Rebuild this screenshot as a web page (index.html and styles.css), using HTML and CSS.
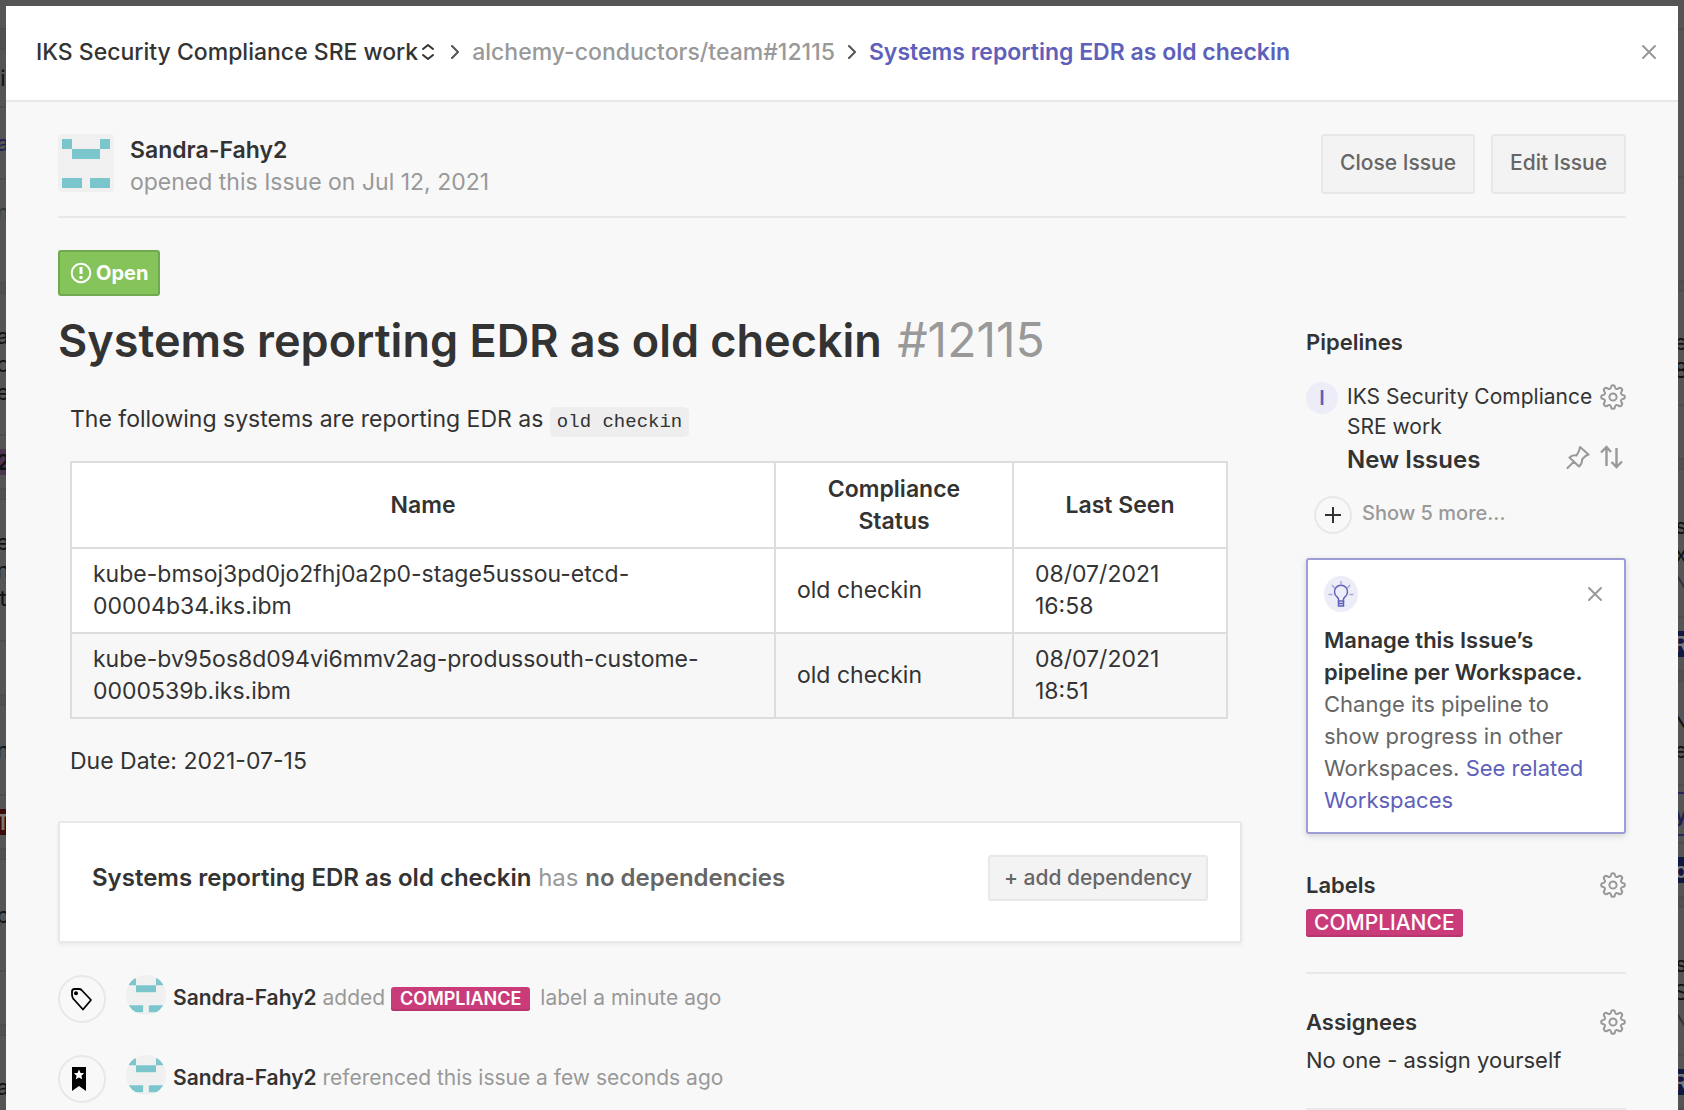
FILE: index.html
```html
<!DOCTYPE html>
<html lang="en">
<head>
<meta charset="utf-8">
<meta name="viewport" content="width=device-width, initial-scale=1">
<title>Systems reporting EDR as old checkin #12115</title>
<link rel="stylesheet" href="styles.css">
</head>
<body>
<svg class="sprite" aria-hidden="true">
  <symbol id="gear" viewBox="0 0 26 26"><g fill="none" stroke="currentColor" stroke-width="2" stroke-linejoin="round"><circle cx="13" cy="13" r="3.6"/><path d="M11 3.200C11.300 0.500 14.700 0.500 15 3.200C15.300 5.200 17 5.500 18.500 4.400C20.600 2.700 23.300 5.400 21.600 7.500C20.500 9 20.800 10.700 22.800 11C25.500 11.300 25.500 14.700 22.800 15C20.800 15.300 20.500 17 21.600 18.500C23.300 20.600 20.600 23.300 18.500 21.600C17 20.500 15.300 20.800 15 22.800C14.700 25.500 11.300 25.500 11 22.800C10.700 20.800 9 20.500 7.500 21.600C5.400 23.300 2.700 20.600 4.400 18.500C5.500 17 5.200 15.300 3.200 15C0.500 14.700 0.500 11.300 3.200 11C5.200 10.700 5.500 9 4.400 7.500C2.700 5.400 5.400 2.700 7.500 4.400C9 5.500 10.700 5.200 11 3.200Z"/></g></symbol>
  <symbol id="cross" viewBox="0 0 16 16"><path d="M2 2l12 12M14 2L2 14" fill="none" stroke="currentColor" stroke-width="2" stroke-linecap="round"/></symbol>
  <symbol id="chevron" viewBox="0 0 10 14"><path d="M2 1l6 6-6 6" fill="none" stroke="currentColor" stroke-width="2" stroke-linecap="round" stroke-linejoin="round"/></symbol>
  <symbol id="identicon" viewBox="0 0 56 58" preserveAspectRatio="none"><rect width="56" height="58" fill="#f0f0f0"/><path fill="#7bc6cd" d="M4 5h10v10h28V5h10v10H42v10H14V15H4zM4 44h20v10H4zM32 44h20v10H32z"/></symbol>
</svg>
<div class="app">
  <div class="board board-left" aria-hidden="true">
    <div class="slot h30"></div><div class="gap h18"></div>
    <div class="slot h58">i</div><div class="slot h72 blue">a</div><div class="slot h104 pale start">n</div><div class="gap h10"></div>
    <div class="slot h142"><span>a</span><span>o</span><span>e</span></div><div class="slot h54"><b class="tag purple">2</b></div><div class="gap h10"></div>
    <div class="slot h142"><span>e</span><span>n</span><span>t</span></div><div class="slot h54"></div><div class="gap h10"></div>
    <div class="slot h90">n</div><div class="slot h54"><b class="tag red">T</b></div><div class="gap h10"></div>
    <div class="slot h112">p</div><div class="slot h54"></div><div class="gap h10"></div>
    <div class="slot h104">a</div>
  </div>
  <main class="modal" role="dialog" aria-labelledby="issue-title">
    <header class="topbar">
      <nav class="crumbs" aria-label="Breadcrumb">
        <button type="button" class="workspace">IKS Security Compliance SRE work
          <svg width="12" height="18" viewBox="0 0 12 18" aria-hidden="true"><path d="M1 6l5-4 5 4M1 12l5 4 5-4" fill="none" stroke="currentColor" stroke-width="2" stroke-linecap="round" stroke-linejoin="round"/></svg>
        </button>
        <svg class="sep sep-wide" width="10" height="14" aria-hidden="true"><use href="#chevron"/></svg>
        <a href="#repo" class="repo">alchemy-conductors/team#12115</a>
        <svg class="sep" width="10" height="14" aria-hidden="true"><use href="#chevron"/></svg>
        <a href="#issue" class="current">Systems reporting EDR as old checkin</a>
      </nav>
      <button type="button" class="icon-button" aria-label="Close"><svg width="16" height="16"><use href="#cross"/></svg></button>
    </header>

    <div class="content">
      <section class="author">
        <svg class="avatar" width="56" height="58" role="img" aria-label="Sandra-Fahy2"><use href="#identicon"/></svg>
        <div class="author-text">
          <strong>Sandra-Fahy2</strong>
          <span class="muted">opened this Issue on Jul 12, 2021</span>
        </div>
        <button type="button" class="button large">Close Issue</button>
        <button type="button" class="button large">Edit Issue</button>
      </section>

      <div class="columns">
        <div class="primary">
          <span class="state">
            <svg width="22" height="22" viewBox="0 0 22 22" aria-hidden="true"><circle cx="11" cy="11" r="9.300" fill="none" stroke="#fff" stroke-width="2"/><path d="M11 5v7M11 14v3" stroke="#fff" stroke-width="3"/></svg>Open
          </span>
          <h1 id="issue-title">Systems reporting EDR as old checkin <span>#12115</span></h1>

          <article class="description">
            <p>The following systems are reporting EDR as <code>old checkin</code></p>
            <table>
              <colgroup><col><col class="col-status"><col class="col-seen"></colgroup>
              <thead><tr><th scope="col">Name</th><th scope="col">Compliance Status</th><th scope="col">Last Seen</th></tr></thead>
              <tbody>
                <tr><td>kube-bmsoj3pd0jo2fhj0a2p0-stage5ussou-etcd-00004b34.iks.ibm</td><td>old checkin</td><td>08/07/2021 16:58</td></tr>
                <tr><td>kube-bv95os8d094vi6mmv2ag-produssouth-custome-0000539b.iks.ibm</td><td>old checkin</td><td>08/07/2021 18:51</td></tr>
              </tbody>
            </table>
            <p>Due Date: 2021-07-15</p>
          </article>

          <section class="dependencies">
            <p><strong>Systems reporting EDR as old checkin</strong> has <b>no dependencies</b></p>
            <button type="button" class="button">+ add dependency</button>
          </section>

          <ul class="activity">
            <li>
              <span class="event"><svg width="22" height="24" viewBox="0 0 22 24" aria-hidden="true"><path d="M1 7.500V4.500Q1 2 3.500 2H8Q9.500 2 10.500 3L20 13L12 22.500L2.500 12Q1 10.500 1 7.500Z" fill="none" stroke="#000" stroke-width="1.800" stroke-linejoin="round"/><circle cx="5" cy="6.200" r="2"/></svg></span>
              <svg class="face" width="40" height="40" aria-hidden="true"><use href="#identicon"/></svg>
              <p><strong>Sandra-Fahy2</strong> added <span class="label small">COMPLIANCE</span> label a minute ago</p>
            </li>
            <li>
              <span class="event"><svg width="22" height="24" viewBox="0 0 22 24" aria-hidden="true"><path d="M1 0h14v24l-7-5-7 5z"/><path fill="#fff" d="M8 2.500l1.500 3.400 3.700.4-2.800 2.400.8 3.600L8 10.400l-3.200 1.900.8-3.600-2.800-2.400 3.700-.4z"/></svg></span>
              <svg class="face" width="40" height="40" aria-hidden="true"><use href="#identicon"/></svg>
              <p><strong>Sandra-Fahy2</strong> referenced this issue a few seconds ago</p>
            </li>
          </ul>
        </div>

        <aside class="sidebar">
          <section class="pipelines">
            <h2>Pipelines</h2>
            <div class="pipeline">
              <span class="initial">I</span>
              <span class="pipeline-name">IKS Security Compliance SRE work</span>
              <button type="button" class="icon-button" aria-label="Pipeline settings"><svg width="26" height="26"><use href="#gear"/></svg></button>
            </div>
            <div class="stage">
              <strong>New Issues</strong>
              <button type="button" class="icon-button" aria-label="Pin"><svg width="24" height="24" viewBox="0 0 24 24"><path d="M14 2L22.500 9.500L19.500 11L16 14.500Q16.500 18.500 13 21.500L3.500 12.500Q6.500 9.500 10.500 10.500L13 6ZM8 16.500L1.500 23" fill="none" stroke="currentColor" stroke-width="2" stroke-linecap="round" stroke-linejoin="round"/></svg></button>
              <button type="button" class="icon-button" aria-label="Move"><svg width="24" height="24" viewBox="0 0 24 24"><path d="M6.500 21V2M1 7.500L6.500 2L11 7M16.500 3v19M11.500 17l5 5 5.500-5.500" fill="none" stroke="currentColor" stroke-width="2.400"/></svg></button>
            </div>
            <button type="button" class="show-more"><span class="plus"><svg width="18" height="18" viewBox="0 0 18 18" aria-hidden="true"><path d="M9 1v16M1 9h16" stroke="#333" stroke-width="2"/></svg></span>Show 5 more...</button>
          </section>

          <section class="tip">
            <div class="tip-head">
              <svg width="34" height="36" viewBox="0 0 34 36" aria-hidden="true"><ellipse cx="17" cy="18" rx="17" ry="18" fill="#ecedf6"/><g fill="none" stroke="#5e60ba" stroke-width="1.500"><path d="M14.500 25V23Q14.500 22 13 20.800A6.500 6.500 0 1 1 21 20.800Q19.500 22 19.500 23V25Z"/><path d="M14.500 25v5h5v-5M14.500 27.500h5"/></g><path d="M17 5v4M8 9l2.500 3M26 9l-2.500 3M4.500 18.500h4M25.500 18.500h4" stroke="#a6a7dd" stroke-width="1.500"/></svg>
              <button type="button" class="icon-button" aria-label="Dismiss"><svg width="16" height="16"><use href="#cross"/></svg></button>
            </div>
            <p><strong>Manage this Issue’s pipeline per Workspace.</strong> Change its pipeline to show progress in other Workspaces. <a href="#related">See related Workspaces</a></p>
          </section>

          <section class="group">
            <div class="group-head"><h2>Labels</h2><button type="button" class="icon-button" aria-label="Edit labels"><svg width="26" height="26"><use href="#gear"/></svg></button></div>
            <span class="label">COMPLIANCE</span>
          </section>
          <section class="group assignees">
            <div class="group-head"><h2>Assignees</h2><button type="button" class="icon-button" aria-label="Edit assignees"><svg width="26" height="26"><use href="#gear"/></svg></button></div>
            <p>No one - assign yourself</p>
          </section>
        </aside>
      </div>
    </div>
  </main>
  <div class="board board-right" aria-hidden="true">
    <div class="slot h30"></div><div class="slot h148"></div><div class="slot h104"></div><div class="gap h10"></div>
    <div class="slot h114 end"><span>e</span><span>8</span></div><div class="slot h54"></div><div class="gap h10"></div>
    <div class="slot h148 end"><span>s</span><span>x</span><span class="pale">N</span></div><div class="slot h54"><b class="tag navy">R</b></div><div class="gap h10"></div>
    <div class="slot h104 end"><span>N</span><span>e</span></div><div class="slot h58"><b class="outline">y</b></div><div class="slot h54"><b class="tag navy">o</b></div><div class="gap h10"></div>
    <div class="slot h148 end"><span>s</span><span>S</span><span class="pale">N</span></div><div class="slot h54"><b class="tag navy">R</b></div>
  </div>
</div>
</body>
</html>
```

FILE: styles.css
```css
*, *::before, *::after { box-sizing: border-box; }

body {
  margin: 0;
  font: 22px/32px Inter, "Liberation Sans", sans-serif;
  color: #333;
  background: #555;
}

p, h1, h2, ul { margin: 0; padding: 0; }
strong, b { font-weight: 600; }
svg { display: block; flex: none; }
a { color: #5e60ba; text-decoration: none; }
button { font: inherit; color: inherit; cursor: pointer; }
.sprite { position: absolute; width: 0; height: 0; }
.muted { color: #999; }

.app {
  display: grid;
  grid-template-columns: 6px minmax(0, 1fr) 6px;
  height: 100vh;
  overflow: hidden;
}

/* Dimmed board behind the dialog */
.board { overflow: hidden; color: #111; line-height: 28px; }
.slot {
  display: flex;
  flex-direction: column;
  align-items: center;
  justify-content: center;
  border-bottom: 2px solid #4d4d4d;
}
.slot.start { justify-content: flex-start; padding-top: 18px; }
.slot.end { justify-content: flex-end; padding-bottom: 20px; }
.gap { background: #505050; border-bottom: 2px solid #4d4d4d; }
.pale { color: #333; }
.blue { color: #1f2050; }
.tag { width: 24px; text-align: center; color: #777; line-height: 26px; }
.purple { background: #4d3450; color: #111; }
.red { background: #3d0a0a; }
.navy { background: #101842; }
.outline { width: 24px; border: 2px solid #24265a; color: #1f2050; line-height: 40px; text-align: center; }
.h10 { height: 10px; }
.h18 { height: 20px; }
.h30 { height: 30px; }
.h54 { height: 54px; }
.h58 { height: 58px; }
.h72 { height: 72px; }
.h90 { height: 90px; }
.h104 { height: 104px; }
.h112 { height: 112px; }
.h114 { height: 114px; }
.h142 { height: 142px; }
.h148 { height: 148px; }

.modal { margin-top: 6px; background: #f8f8f8; }

.topbar {
  display: flex;
  align-items: center;
  justify-content: space-between;
  min-height: 96px;
  padding: 0 21px 2px 30px;
  background: #fff;
  border-bottom: 2px solid #e8e8e8;
}
.crumbs { display: flex; align-items: center; font-size: 23px; font-weight: 500; }
.workspace {
  display: flex;
  align-items: center;
  gap: 4px;
  padding: 0;
  border: 0;
  background: none;
  font-weight: 500;
}
.sep { margin: 0 12px; color: #555; }
.sep-wide { margin-left: 16px; }
.repo { color: #999; }
.current { font-weight: 600; }

.icon-button { padding: 0; border: 0; background: none; color: #999; }

.content { padding: 32px 52px 0; }

.author {
  display: flex;
  gap: 16px;
  padding-bottom: 18px;
  border-bottom: 2px solid #e8e8e8;
}
.avatar { border-radius: 4px; }
.author-text { flex: 1; display: flex; flex-direction: column; font-size: 23px; }
.button {
  height: 46px;
  padding: 0 14px;
  border: 2px solid #e8e8e8;
  border-radius: 3px;
  background: #f3f3f3;
  color: #666;
  font-size: 21px;
  font-weight: 500;
}
.button.large { height: 60px; padding: 0 17px 2px; }

.columns { display: grid; grid-template-columns: minmax(0, 1fr) 320px; gap: 64px; }
.primary { padding-top: 32px; }

.state {
  display: inline-flex;
  align-items: center;
  gap: 4px;
  height: 46px;
  padding: 0 10px;
  border: 2px solid #71a950;
  border-radius: 3px;
  background: #84c45a;
  color: #fff;
  font-size: 20px;
  font-weight: 700;
  vertical-align: top;
}
h1 { margin-top: 12px; font-size: 45px; font-weight: 600; line-height: 64px; }
h1 span { margin-left: 4px; color: #999; font-size: 48px; font-weight: 400; }

.description { padding: 30px 14px 0 12px; font-size: 23px; }
code {
  padding: 4px 7px;
  border-radius: 5px;
  background: #eee;
  font: 19px/20px "Liberation Mono", monospace;
}
table {
  width: 100%;
  margin: 26px 0;
  table-layout: fixed;
  border-collapse: collapse;
  background: #fff;
}
.col-status { width: 238px; }
.col-seen { width: 214px; }
th, td { padding: 10px 21px; border: 2px solid #ddd; text-align: left; }
th { font-weight: 600; text-align: center; }
td { padding-top: 9px; }
tbody tr:nth-child(2) { background: #f7f7f7; }

.dependencies {
  display: flex;
  align-items: flex-start;
  justify-content: space-between;
  min-height: 122px;
  margin-top: 44px;
  padding: 32px 32px 0;
  border: 2px solid #e8e8e8;
  border-radius: 3px;
  background: #fff;
  box-shadow: 0 2px 4px rgba(0, 0, 0, .06);
}
.dependencies p { padding-top: 7px; color: #999; font-size: 24px; }
.dependencies strong { color: #333; }
.dependencies b { color: #666; }

.activity { display: grid; gap: 32px; margin-top: 32px; list-style: none; }
.activity li { display: flex; color: #999; font-size: 21px; }
.activity p { margin-left: 7px; padding-top: 7px; }
.activity strong { color: #333; }
.event {
  display: grid;
  place-items: center;
  width: 48px;
  height: 48px;
  margin-right: 20px;
  border: 2px solid #e8e8e8;
  border-radius: 50%;
}
.face { border-radius: 50%; }

.label {
  display: inline-block;
  padding: 0 8px;
  border-radius: 3px;
  background: #c93c79;
  box-shadow: inset 0 -2px #b8366e;
  color: #fff;
  font-size: 21px;
  font-weight: 500;
  line-height: 28px;
  vertical-align: top;
}
.label.small { margin: 5px 4px 0 0; padding: 0 9px; font-size: 18px; font-weight: 600; line-height: 24px; }

.sidebar { padding-top: 108px; }
h2 { font-size: 22px; font-weight: 600; line-height: 32px; }
.pipeline { display: flex; align-items: flex-start; margin-top: 24px; }
.initial {
  flex: none;
  width: 32px;
  height: 32px;
  margin-right: 9px;
  border-radius: 50%;
  background: #ecedf6;
  color: #5e60ba;
  font-size: 20px;
  font-weight: 600;
  text-align: center;
}
.pipeline-name { flex: 1; font-size: 21px; line-height: 30px; }
.pipeline .icon-button { margin-top: 2px; }
.stage { display: flex; align-items: center; gap: 10px; padding: 0 2px 0 41px; }
.stage strong { flex: 1; font-size: 24px; line-height: 36px; }
.stage .icon-button { margin-bottom: 6px; }
.show-more {
  display: flex;
  gap: 10px;
  margin: 18px 0 0 8px;
  padding: 0;
  border: 0;
  background: none;
  color: #999;
  font-size: 20px;
  font-weight: 500;
  line-height: 34px;
}
.plus {
  display: grid;
  place-items: center;
  width: 38px;
  height: 38px;
  border: 2px solid #e8e8e8;
  border-radius: 50%;
}

.tip {
  min-height: 276px;
  margin-top: 24px;
  padding: 16px;
  border: 2px solid #9c9dd6;
  border-radius: 3px;
  background: #fff;
  box-shadow: 0 2px 6px rgba(0, 0, 0, .15);
  color: #666;
}
.tip-head { display: flex; align-items: center; justify-content: space-between; padding-right: 5px; }
.tip p { margin-top: 12px; }
.tip strong { display: block; color: #333; }

.group { margin-top: 35px; padding-bottom: 31px; border-bottom: 2px solid #e8e8e8; }
.group-head { display: flex; align-items: center; justify-content: space-between; margin-bottom: 8px; }
.assignees { margin-top: 32px; padding-bottom: 32px; }
.assignees .group-head { margin-bottom: 6px; }
```
